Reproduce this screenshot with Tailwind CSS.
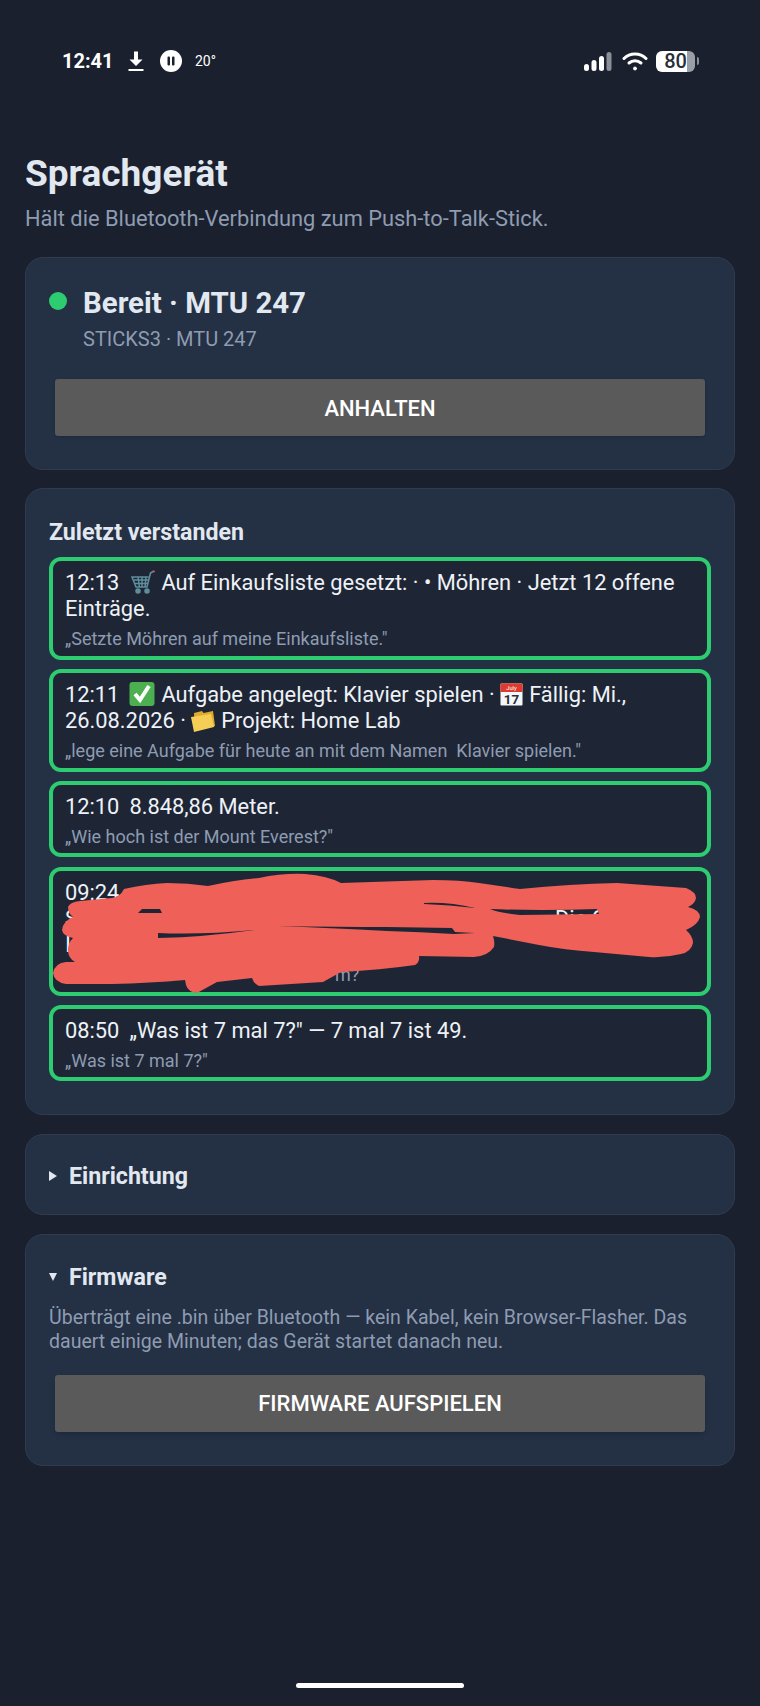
<!DOCTYPE html>
<html lang="de">
  <head>
    <meta charset="UTF-8" />
    <meta name="viewport" content="width=device-width, initial-scale=1.0" />
    <title>Sprachgerät</title>
    <script src="https://cdn.jsdelivr.net/npm/@tailwindcss/browser@4"></script>
  </head>

  <body class="h-[1706px] overflow-hidden bg-[#1a202e] font-['Roboto',sans-serif] text-[#e2e8f0]">
    <!-- Status bar -->
    <div class="flex items-center justify-between pt-[44px] pl-[62px] pr-[61px] h-[78px]">
      <div class="flex items-center">
        <span class="text-[20px] leading-[34px] font-bold text-white w-[65px]">12:41</span>
        <svg class="w-[18px] h-[22px]" viewBox="0 0 18 22" fill="#fff">
          <path d="M7 1.500h4v8h4.500L9 16 2.500 9.500H7z"/>
          <rect x="1.500" y="19" width="15" height="2"/>
        </svg>
        <svg class="w-[22px] h-[22px] ml-[15px]" viewBox="0 0 22 22">
          <circle cx="11" cy="11" r="11" fill="#fff"/>
          <rect x="7.500" y="6.500" width="2.500" height="9" rx="1" fill="#1a202e"/>
          <rect x="12" y="6.500" width="2.500" height="9" rx="1" fill="#1a202e"/>
        </svg>
        <span class="text-[14px] leading-[34px] text-white ml-[13px]">20°</span>
      </div>
      <div class="flex items-center">
        <svg class="w-[28px] h-[20px]" viewBox="0 0 28 20">
          <rect x="0" y="13" width="5" height="7" rx="2.500" fill="#fff"/>
          <rect x="7.500" y="9" width="5" height="11" rx="2.500" fill="#fff"/>
          <rect x="15" y="5" width="5" height="15" rx="2.500" fill="#fff"/>
          <rect x="22.500" y="1" width="5" height="19" rx="2.500" fill="#8a8f98"/>
        </svg>
        <svg class="w-[26px] h-[20px] ml-[10px]" viewBox="0 0 26 20" fill="none" stroke="#fff" stroke-width="3" stroke-linecap="round">
          <path d="M2 7.500C8 1.500 18 1.500 24 7.500"/>
          <path d="M7 12C10.500 9 15.500 9 19 12"/>
          <circle cx="13" cy="17.500" r="1.500" fill="#fff" stroke-width="1"/>
        </svg>
        <div class="relative flex items-center ml-[8px]">
          <div class="w-[39px] h-[21px] rounded-[6px] bg-[linear-gradient(90deg,#fff_0,#fff_80%,#9a9ea6_80%,#9a9ea6_100%)] text-[#2a2e38] text-[20px] leading-[21px] font-medium text-center">80</div>
          <div class="w-[2px] h-[8px] ml-[2px] rounded-r-[2px] bg-[#8a8f98]"></div>
        </div>
      </div>
    </div>

    <main class="px-[25px]">
      <h1 class="mt-[76px] text-[37px] leading-[40px] font-bold text-[#e2e8f0]">Sprachgerät</h1>
      <p class="mt-[12px] text-[21.850px] leading-[26px] text-[#8e9cb1]">Hält die Bluetooth-Verbindung zum Push-to-Talk-Stick.</p>

      <!-- Status -->
      <section class="mt-[25px] h-[213px] rounded-[18px] border border-[#2f3c50] bg-[#243044] pt-[27px] px-[23px]">
        <div class="flex items-start">
          <span class="mt-[7px] w-[18px] h-[18px] rounded-full bg-[#2ecc71]"></span>
          <div class="ml-[16px]">
            <div class="text-[29.400px] leading-[36px] font-bold">Bereit · MTU 247</div>
            <div class="mt-[5px] text-[20px] leading-[26px] text-[#8e9cb1]">STICKS3 · MTU 247</div>
          </div>
        </div>
        <button class="mt-[27px] mx-[6px] w-[650px] h-[57px] pt-[2px] rounded-[3px] bg-[#5a5a5a] text-[22px] font-medium text-white shadow-sm">ANHALTEN</button>
      </section>

      <!-- Zuletzt verstanden -->
      <section class="mt-[18px] h-[627px] rounded-[18px] border border-[#2f3c50] bg-[#243044] pt-[29px] px-[23px]">
        <h2 class="text-[23.200px] leading-[28px] font-bold">Zuletzt verstanden</h2>
        <div class="mt-[11px] flex flex-col gap-[9px] w-[662px]">
          <div class="rounded-[12px] border-[4px] border-[#2ecc71] bg-[#1e2636] pt-[9px] pb-[5px] px-[12px]">
            <p class="text-[21.850px] leading-[26px] text-[#eef2f6]"><span class="mr-[10px]">12:13</span><svg class="inline-block align-[-4px] w-[26px] h-[24px] mr-[6px]" viewBox="0 0 26 24" fill="none" stroke="#5f8f9e" stroke-width="1.500"><path d="M25 1l-3.500 2-3.500 14H7L3 7h16.500" /><path d="M5 10h15M6 13.500h13M9 7l1.500 10M13 7v10M17 7l-1 10"/><circle cx="9" cy="21" r="2" fill="#5f8f9e"/><circle cx="18" cy="21" r="2" fill="#5f8f9e"/><circle cx="25" cy="1.500" r="1" fill="#e0483e" stroke="none"/></svg>Auf Einkaufsliste gesetzt: · • Möhren · Jetzt 12 offene Einträge.</p>
            <p class="mt-[5px] text-[18px] leading-[24px] text-[#8e9cb1]">„Setzte Möhren auf meine Einkaufsliste."</p>
          </div>
          <div class="rounded-[12px] border-[4px] border-[#2ecc71] bg-[#1e2636] pt-[9px] pb-[5px] px-[12px]">
            <p class="text-[21.850px] leading-[26px] text-[#eef2f6]"><span class="mr-[10px]">12:11</span><svg class="inline-block align-[-4px] w-[26px] h-[24px] mr-[6px]" viewBox="0 0 26 24"><rect x="0.500" y="0" width="25" height="24" rx="3" fill="#4caf50"/><path d="M6 12l5 6L20 4" fill="none" stroke="#fff" stroke-width="4"/></svg>Aufgabe angelegt: Klavier spielen · <svg class="inline-block align-[-4px] w-[23px] h-[24px] mr-[6px]" viewBox="0 0 24 24"><rect x="0.500" y="1" width="23" height="23" rx="1" fill="#f4f6f8"/><path d="M.5 2a1 1 0 0 1 1-1h21a1 1 0 0 1 1 1v8H.5z" fill="#dc3b30"/><text x="12" y="22" font-size="14" font-weight="700" text-anchor="middle" fill="#2a2e38" font-family="Roboto">17</text><text x="12" y="8" font-size="6" text-anchor="middle" fill="#fff" font-family="Roboto">July</text></svg>Fällig: Mi., 26.08.2026 · <svg class="inline-block align-[-4px] w-[24px] h-[24px] mr-[6px]" viewBox="0 0 24 24"><path d="M3 5l8-2 1.500 2L22 3l2 15-20 5z" fill="#e0ac2c"/><path d="M0 9l20-3 3 13-20 5z" fill="#f7ce55"/></svg>Projekt: Home Lab</p>
            <p class="mt-[5px] text-[18px] leading-[24px] text-[#8e9cb1] whitespace-pre">„lege eine Aufgabe für heute an mit dem Namen  Klavier spielen."</p>
          </div>
          <div class="rounded-[12px] border-[4px] border-[#2ecc71] bg-[#1e2636] pt-[9px] pb-[4px] px-[12px]">
            <p class="text-[21.850px] leading-[26px] text-[#eef2f6]"><span class="mr-[10px]">12:10</span>8.848,86 Meter.</p>
            <p class="mt-[5px] text-[18px] leading-[24px] text-[#8e9cb1]">„Wie hoch ist der Mount Everest?"</p>
          </div>
          <div class="relative mt-px h-[129px] rounded-[12px] border-[4px] border-[#2ecc71] bg-[#1e2636] pt-[9px] pb-[4px] px-[12px]">
            <p class="text-[21.850px] leading-[26px] text-[#eef2f6]">09:24</p>
            <p class="flex text-[21.850px] leading-[26px] text-[#eef2f6]"><span>S</span><span class="ml-[477px]">Die G</span></p>
            <p class="text-[21.850px] leading-[26px] text-[#eef2f6]">I</p>
            <p class="mt-[5px] pl-[270px] text-[18px] leading-[24px] text-[#8e9cb1]">m?</p>
            <!-- Schwärzung, Koordinaten relativ zur Zeile (x-49, y-867) -->
            <svg class="absolute -left-[4px] -top-[4px] w-[662px] h-[129px] overflow-visible" viewBox="49 867 662 129">
              <path fill-rule="evenodd" fill="#ee6058" d="M124 889Q146 884 167 883Q188 883 208 886Q235 880 259 878Q283 873 305 874Q328 876 341 883L433 880Q460 880 479 883Q500 886 520 889Q570 884 617 883L686 888Q696 892 696 898Q695 904 688 907Q700 910 700 917Q698 925 686 930Q693 936 693 943Q691 952 681 954Q665 958 649 957L594 952Q565 950 539 945L493 936Q495 942 494 947Q488 956 474 957L419 956Q420 962 415 965Q380 970 341 972L323 982L259 986Q254 984 252 978L217 982L197 993Q188 992 186 985L185 980Q150 983 112 984L66 984Q54 982 53 973Q55 963 66 962L75 962Q68 958 68 950Q68 943 73 938Q63 936 62 930Q63 921 73 917Q68 913 68 907Q70 902 80 901L112 898Q120 897 124 889Z M138 913L142 909L160 909L162 913Z M158 933Q200 935 254 930Q205 937 158 938Z M277 926Q340 927 387 927L452 928L455 932L475 933L454 934Q420 932 387 931Q330 928 277 926Z M424 903Q450 902 475 908Q450 905 424 904Z M490 909Q540 911 597 909L599 914L520 915Q500 913 490 909Z"/>
            </svg>
          </div>
          <div class="rounded-[12px] border-[4px] border-[#2ecc71] bg-[#1e2636] pt-[9px] pb-[4px] px-[12px]">
            <p class="text-[21.850px] leading-[26px] text-[#eef2f6]"><span class="mr-[10px]">08:50</span>„Was ist 7 mal 7?" — 7 mal 7 ist 49.</p>
            <p class="mt-[5px] text-[18px] leading-[24px] text-[#8e9cb1]">„Was ist 7 mal 7?"</p>
          </div>
        </div>
      </section>

      <!-- Einrichtung -->
      <section class="mt-[19px] h-[81px] rounded-[18px] border border-[#2f3c50] bg-[#243044] px-[23px] pt-[2px] flex items-center">
        <svg class="w-[8px] h-[10px]" viewBox="0 0 8 10" fill="#e2e8f0"><path d="M0 0l8 5-8 5z"/></svg>
        <h2 class="ml-[12px] text-[23.200px] leading-[28px] font-bold">Einrichtung</h2>
      </section>

      <!-- Firmware -->
      <section class="mt-[19px] h-[232px] rounded-[18px] border border-[#2f3c50] bg-[#243044] pt-[28px] px-[23px]">
        <div class="flex items-center">
          <svg class="w-[8px] h-[8px]" viewBox="0 0 8 8" fill="#e2e8f0"><path d="M0 0h8L4 8z"/></svg>
          <h2 class="ml-[12px] text-[23.200px] leading-[28px] font-bold">Firmware</h2>
        </div>
        <p class="mt-[15px] text-[19.550px] leading-[24px] text-[#8e9cb1]">Überträgt eine .bin über Bluetooth — kein Kabel, kein Browser-Flasher. Das dauert einige Minuten; das Gerät startet danach neu.</p>
        <button class="mt-[21px] mx-[6px] w-[650px] h-[57px] rounded-[3px] bg-[#5a5a5a] text-[22px] font-medium text-white shadow-md">FIRMWARE AUFSPIELEN</button>
      </section>
    </main>

    <!-- Home indicator -->
    <div class="mt-[217px] mx-auto w-[168px] h-[5px] rounded-full bg-white"></div>
  </body>
</html>
